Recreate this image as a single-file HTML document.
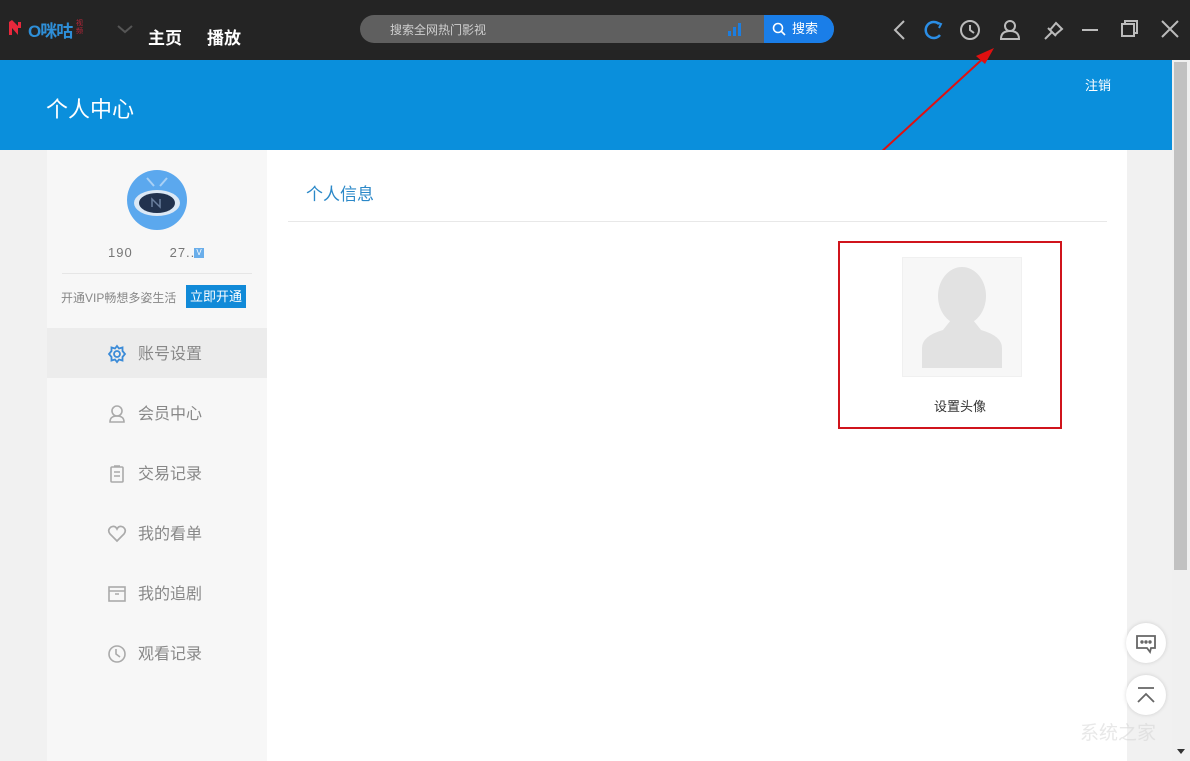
<!DOCTYPE html>
<html><head><meta charset="utf-8"><style>
*{margin:0;padding:0;box-sizing:border-box}
body{width:1190px;height:761px;overflow:hidden;background:#f1f1f1;font-family:"Liberation Sans","Microsoft YaHei","Noto Sans CJK SC",sans-serif;position:relative}
.abs{position:absolute}
.top{left:0;top:0;width:1190px;height:60px;background:#242424}
.banner{left:0;top:60px;width:1172px;height:90px;background:#0a8fdc}
.side{left:47px;top:150px;width:220px;height:611px;background:#f7f7f7}
.main{left:267px;top:150px;width:860px;height:611px;background:#fff}
.sb{left:1172px;top:60px;width:18px;height:701px;background:#f0f0f0}
.thumb{left:1174px;top:62px;width:13px;height:508px;background:#c1c1c1}
.menu{left:47px;width:220px;height:50px;font-size:16px;color:#888;line-height:54px}
.menu span{position:absolute;left:91px}
.menu svg{position:absolute;left:60px;top:16px}
</style></head><body>
<div class="abs top"></div>
<div class="abs" style="left:8px;top:20px;width:16px;height:16px">
<svg width="18" height="16"><path d="M1 2 L1 15 L4 15 L4 8 L10 15 L10 8 L13 8 L13 2 L10 2 L10 6 L4 0 Z" fill="#e8283c"/></svg></div>
<div class="abs" style="left:28px;top:17px;color:#2e8fd8;font-size:17px;font-weight:bold;letter-spacing:-1px">O咪咕</div>
<div class="abs" style="left:76px;top:20px;color:#c0263a;font-size:7px;line-height:8px;width:12px">视频</div>
<svg class="abs" style="left:116px;top:24px" width="18" height="10"><path d="M2 2 L9 8 L16 2" stroke="#555" stroke-width="2" fill="none"/></svg>
<div class="abs" style="left:148px;top:24px;color:#fff;font-size:17px;font-weight:bold">主页</div>
<div class="abs" style="left:207px;top:24px;color:#fff;font-size:17px;font-weight:bold">播放</div>
<div class="abs" style="left:360px;top:15px;width:474px;height:28px;border-radius:14px;background:#5f5f5f;overflow:hidden">
 <div class="abs" style="left:30px;top:6px;color:#cfcfcf;font-size:12px">搜索全网热门影视</div>
 <svg class="abs" style="left:366px;top:6px" width="18" height="16"><rect x="2" y="10" width="3" height="5" fill="#1c7ee0"/><rect x="7" y="6" width="3" height="9" fill="#1c7ee0"/><rect x="12" y="2" width="3" height="13" fill="#1c7ee0"/></svg>
 <div class="abs" style="left:404px;top:0;width:70px;height:28px;background:#1a7ee8;color:#fff;font-size:13px;line-height:28px;padding-left:28px">搜索</div>
 <svg class="abs" style="left:412px;top:7px" width="15" height="15"><circle cx="6" cy="6" r="4.5" stroke="#fff" stroke-width="1.6" fill="none"/><path d="M9.5 9.5 L13 13" stroke="#fff" stroke-width="1.6"/></svg>
</div>
<svg class="abs" style="left:890px;top:18px" width="300" height="26" fill="none" stroke="#bbb" stroke-width="2">
 <path d="M14 3 L5 12 L14 21"/>
 <path d="M49 6 A8 8 0 1 0 50 17" stroke="#2b8ee6" stroke-width="2.5"/><path d="M46 4 L51 6 L49 10" stroke="#2b8ee6" stroke-width="2"/>
 <circle cx="80" cy="12" r="9"/><path d="M80 7 L80 12 L84 15"/>
 <circle cx="120" cy="8" r="5"/><path d="M111 21 Q111 13 120 13 Q129 13 129 21 Z"/>
 <path d="M155 21 L162 14 M158 10 L166 18 M160 12 L166 5 L172 11 L165 17"/>
 <path d="M192 12 L208 12"/>
 <rect x="232" y="6" width="12" height="12"/><path d="M235 6 L235 3 L247 3 L247 15 L244 15"/>
 <path d="M272 3 L288 19 M288 3 L272 19"/>
</svg>
<div class="abs banner"></div>
<div class="abs" style="left:46px;top:92px;color:#fff;font-size:22px">个人中心</div>
<div class="abs" style="left:1085px;top:75px;color:#fff;font-size:13px">注销</div>
<svg class="abs" style="left:870px;top:40px;width:130px;height:120px"><path d="M9 114 L118 14" stroke="#e01010" stroke-width="2"/><path d="M124 8 L106 16 L115 24 Z" fill="#e01010"/></svg>
<div class="abs sb"></div><div class="abs thumb"></div>
<svg class="abs" style="left:1176px;top:748px" width="10" height="8"><path d="M1 1 L9 1 L5 6Z" fill="#333"/></svg>
<div class="abs side"></div>
<div class="abs main"></div>
<svg class="abs" style="left:127px;top:170px" width="60" height="62">
 <circle cx="30" cy="30" r="30" fill="#5ba8ee"/>
 <path d="M20 8 L27 16 M40 8 L33 16" stroke="#a8d0f5" stroke-width="2"/>
 <ellipse cx="30" cy="33" rx="23" ry="13" fill="#dbe8f5"/>
 <ellipse cx="30" cy="33" rx="18" ry="10" fill="#21324e"/>
 <path d="M25 37 L25 29 L33 37 L33 29" stroke="#6a7f9e" stroke-width="1.5" fill="none"/>
</svg>
<div class="abs" style="left:108px;top:245px;color:#777;font-size:13px;letter-spacing:1px">190&nbsp;&nbsp;&nbsp;&nbsp;&nbsp;&nbsp;&nbsp;&nbsp;27..</div>
<div class="abs" style="left:194px;top:248px;width:10px;height:10px;background:#6aaeea;color:#fff;font-size:8px;line-height:10px;text-align:center">V</div>
<div class="abs" style="left:62px;top:273px;width:190px;height:1px;background:#e6e6e6"></div>
<div class="abs" style="left:61px;top:289px;color:#888;font-size:12px">开通VIP畅想多姿生活</div>
<div class="abs" style="left:186px;top:285px;width:60px;height:23px;background:#118ad8;color:#fff;font-size:13px;line-height:23px;text-align:center">立即开通</div>
<div class="abs menu" style="top:328px;background:#ececec"><svg width="20" height="20" fill="none" stroke="#3b8bd8" stroke-width="1.8"><circle cx="10" cy="10" r="3"/><path d="M10 2 L12 4.5 L15.5 3.5 L15.5 7 L18 10 L15.5 13 L15.5 16.5 L12 15.5 L10 18 L8 15.5 L4.5 16.5 L4.5 13 L2 10 L4.5 7 L4.5 3.5 L8 4.5 Z"/></svg><span>账号设置</span></div>
<div class="abs menu" style="top:388px"><svg width="20" height="20" fill="none" stroke="#aaa" stroke-width="1.6"><circle cx="10" cy="7" r="5"/><path d="M3 18 Q3 12 10 12 Q17 12 17 18 Z"/></svg><span>会员中心</span></div>
<div class="abs menu" style="top:448px"><svg width="20" height="20" fill="none" stroke="#aaa" stroke-width="1.6"><rect x="4" y="3" width="12" height="15" rx="1"/><path d="M7 2 L13 2 M7 8 L13 8 M7 12 L13 12"/></svg><span>交易记录</span></div>
<div class="abs menu" style="top:508px"><svg width="20" height="20" fill="none" stroke="#aaa" stroke-width="1.7"><path d="M10 17 L3 10 Q0 6 4 3 Q8 1 10 5 Q12 1 16 3 Q20 6 17 10 Z"/></svg><span>我的看单</span></div>
<div class="abs menu" style="top:568px"><svg width="20" height="20" fill="none" stroke="#aaa" stroke-width="1.6"><rect x="2" y="3" width="16" height="14"/><path d="M2 7 L18 7 M8 10 L12 10"/></svg><span>我的追剧</span></div>
<div class="abs menu" style="top:628px"><svg width="20" height="20" fill="none" stroke="#aaa" stroke-width="1.6"><circle cx="10" cy="10" r="8"/><path d="M9 5 L9 10 L13 13"/></svg><span>观看记录</span></div>
<div class="abs" style="left:306px;top:180px;color:#2b88c8;font-size:17px">个人信息</div>
<div class="abs" style="left:288px;top:221px;width:819px;height:1px;background:#e8e8e8"></div>
<div class="abs" style="left:838px;top:241px;width:224px;height:188px;border:2px solid #d0141c"></div>
<div class="abs" style="left:902px;top:257px;width:120px;height:120px;background:#f7f7f7;border:1px solid #f0f0f0;overflow:hidden">
<svg width="120" height="120"><ellipse cx="59" cy="38" rx="24" ry="29" fill="#e2e2e2"/><path d="M19 110 L19 90 Q19 78 40 72 L48 62 L70 62 L78 72 Q99 78 99 90 L99 110 Z" fill="#e2e2e2"/></svg></div>
<div class="abs" style="left:934px;top:396px;color:#333;font-size:13px">设置头像</div>
<div class="abs" style="left:1126px;top:623px;width:40px;height:40px;border-radius:50%;background:#fff;box-shadow:0 0 4px rgba(0,0,0,.15)"><svg width="40" height="40" fill="none" stroke="#666" stroke-width="1.8"><path d="M11 13 L29 13 L29 25 L25 25 L24 29 L21 25 L11 25 Z"/><circle cx="16" cy="19" r=".8" fill="#666"/><circle cx="20" cy="19" r=".8" fill="#666"/><circle cx="24" cy="19" r=".8" fill="#666"/></svg></div>
<div class="abs" style="left:1126px;top:675px;width:40px;height:40px;border-radius:50%;background:#fff;box-shadow:0 0 4px rgba(0,0,0,.15)"><svg width="40" height="40" fill="none" stroke="#666" stroke-width="1.8"><path d="M12 13 L28 13 M12 27 L20 19 L28 27"/></svg></div>
<div class="abs" style="left:1080px;top:718px;color:rgba(210,210,210,.5);font-size:19px">系统之家</div>
</body></html>
